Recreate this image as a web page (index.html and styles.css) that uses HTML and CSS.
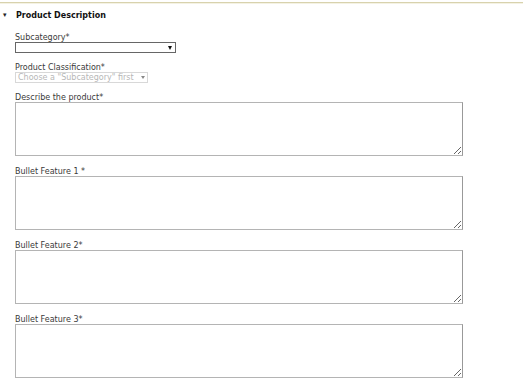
FILE: index.html
```html
<!DOCTYPE html>
<html lang="en">
<head>
    <meta charset="UTF-8">
    <title>Product Description</title>
    <link rel="stylesheet" href="styles.css">
</head>
<body>
    <div class="panel">
        <div class="panel-head">
            <span class="toggle">&#9662;</span>
            <h2>Product Description</h2>
        </div>
        <div class="panel-body">
            <div class="field field-select">
                <label>Subcategory*</label>
                <div class="select-wrap select-wide">
                    <select><option></option></select>
                </div>
            </div>
            <div class="field field-select">
                <label>Product Classification*</label>
                <div class="select-wrap select-small">
                    <select disabled><option>Choose a "Subcategory" first</option></select>
                </div>
            </div>
            <div class="field">
                <label>Describe the product*</label>
                <textarea></textarea>
            </div>
            <div class="field">
                <label>Bullet Feature 1 *</label>
                <textarea></textarea>
            </div>
            <div class="field">
                <label>Bullet Feature 2*</label>
                <textarea></textarea>
            </div>
            <div class="field">
                <label>Bullet Feature 3*</label>
                <textarea></textarea>
            </div>
        </div>
    </div>
</body>
</html>
```

FILE: styles.css
```css
body {
    margin: 0;
    background-color: #fff;
    color: #333;
    font-family: "DejaVu Sans", Verdana, sans-serif;
    font-size: 8px;
}
.panel {
    margin-top: 2px;
    border-top: 1px solid #d8d2ad;
}
.panel-head {
    display: flex;
    align-items: center;
    height: 22px;
    border-top: 1px solid #f4f2e4;
}
.toggle {
    width: 16px;
    padding-left: 3px;
    box-sizing: border-box;
    font-size: 7px;
    color: #222;
}
.panel-head h2 {
    margin: 0;
    font-size: 8px;
    font-weight: bold;
    color: #111;
}
.panel-body {
    padding: 7px 0 0 15px;
}
.field {
    display: flex;
    flex-direction: column;
    align-items: flex-start;
    margin-bottom: 11px;
}
.field-select {
    margin-bottom: 10px;
}
.field label {
    line-height: 9px;
    color: #3a3a3a;
}
.select-wrap {
    position: relative;
    height: 11px;
}
.select-wrap select {
    appearance: none;
    width: 100%;
    height: 11px;
    padding: 0 0 0 2px;
    margin: 0;
    background: #fff;
    font-family: "DejaVu Sans", Verdana, sans-serif;
    font-size: 8px;
    line-height: 9px;
}
.select-wrap::after {
    content: "";
    position: absolute;
    top: 4px;
    right: 4px;
    border-left: 2px solid transparent;
    border-right: 2px solid transparent;
    border-top: 4px solid #111;
}
.select-wide {
    width: 161px;
}
.select-wide select {
    border: 1px solid #666;
}
.select-small {
    width: 133px;
}
.select-small select {
    border: 1px solid #c8c8c8;
    color: #999;
}
.select-small::after {
    top: 4px;
    right: 3px;
    border-top: 3px solid #888;
}
textarea {
    width: 448px;
    height: 54px;
    box-sizing: border-box;
    border: 1px solid #b4b4b4;
    border-right-color: #999;
    margin: 0;
}
```
